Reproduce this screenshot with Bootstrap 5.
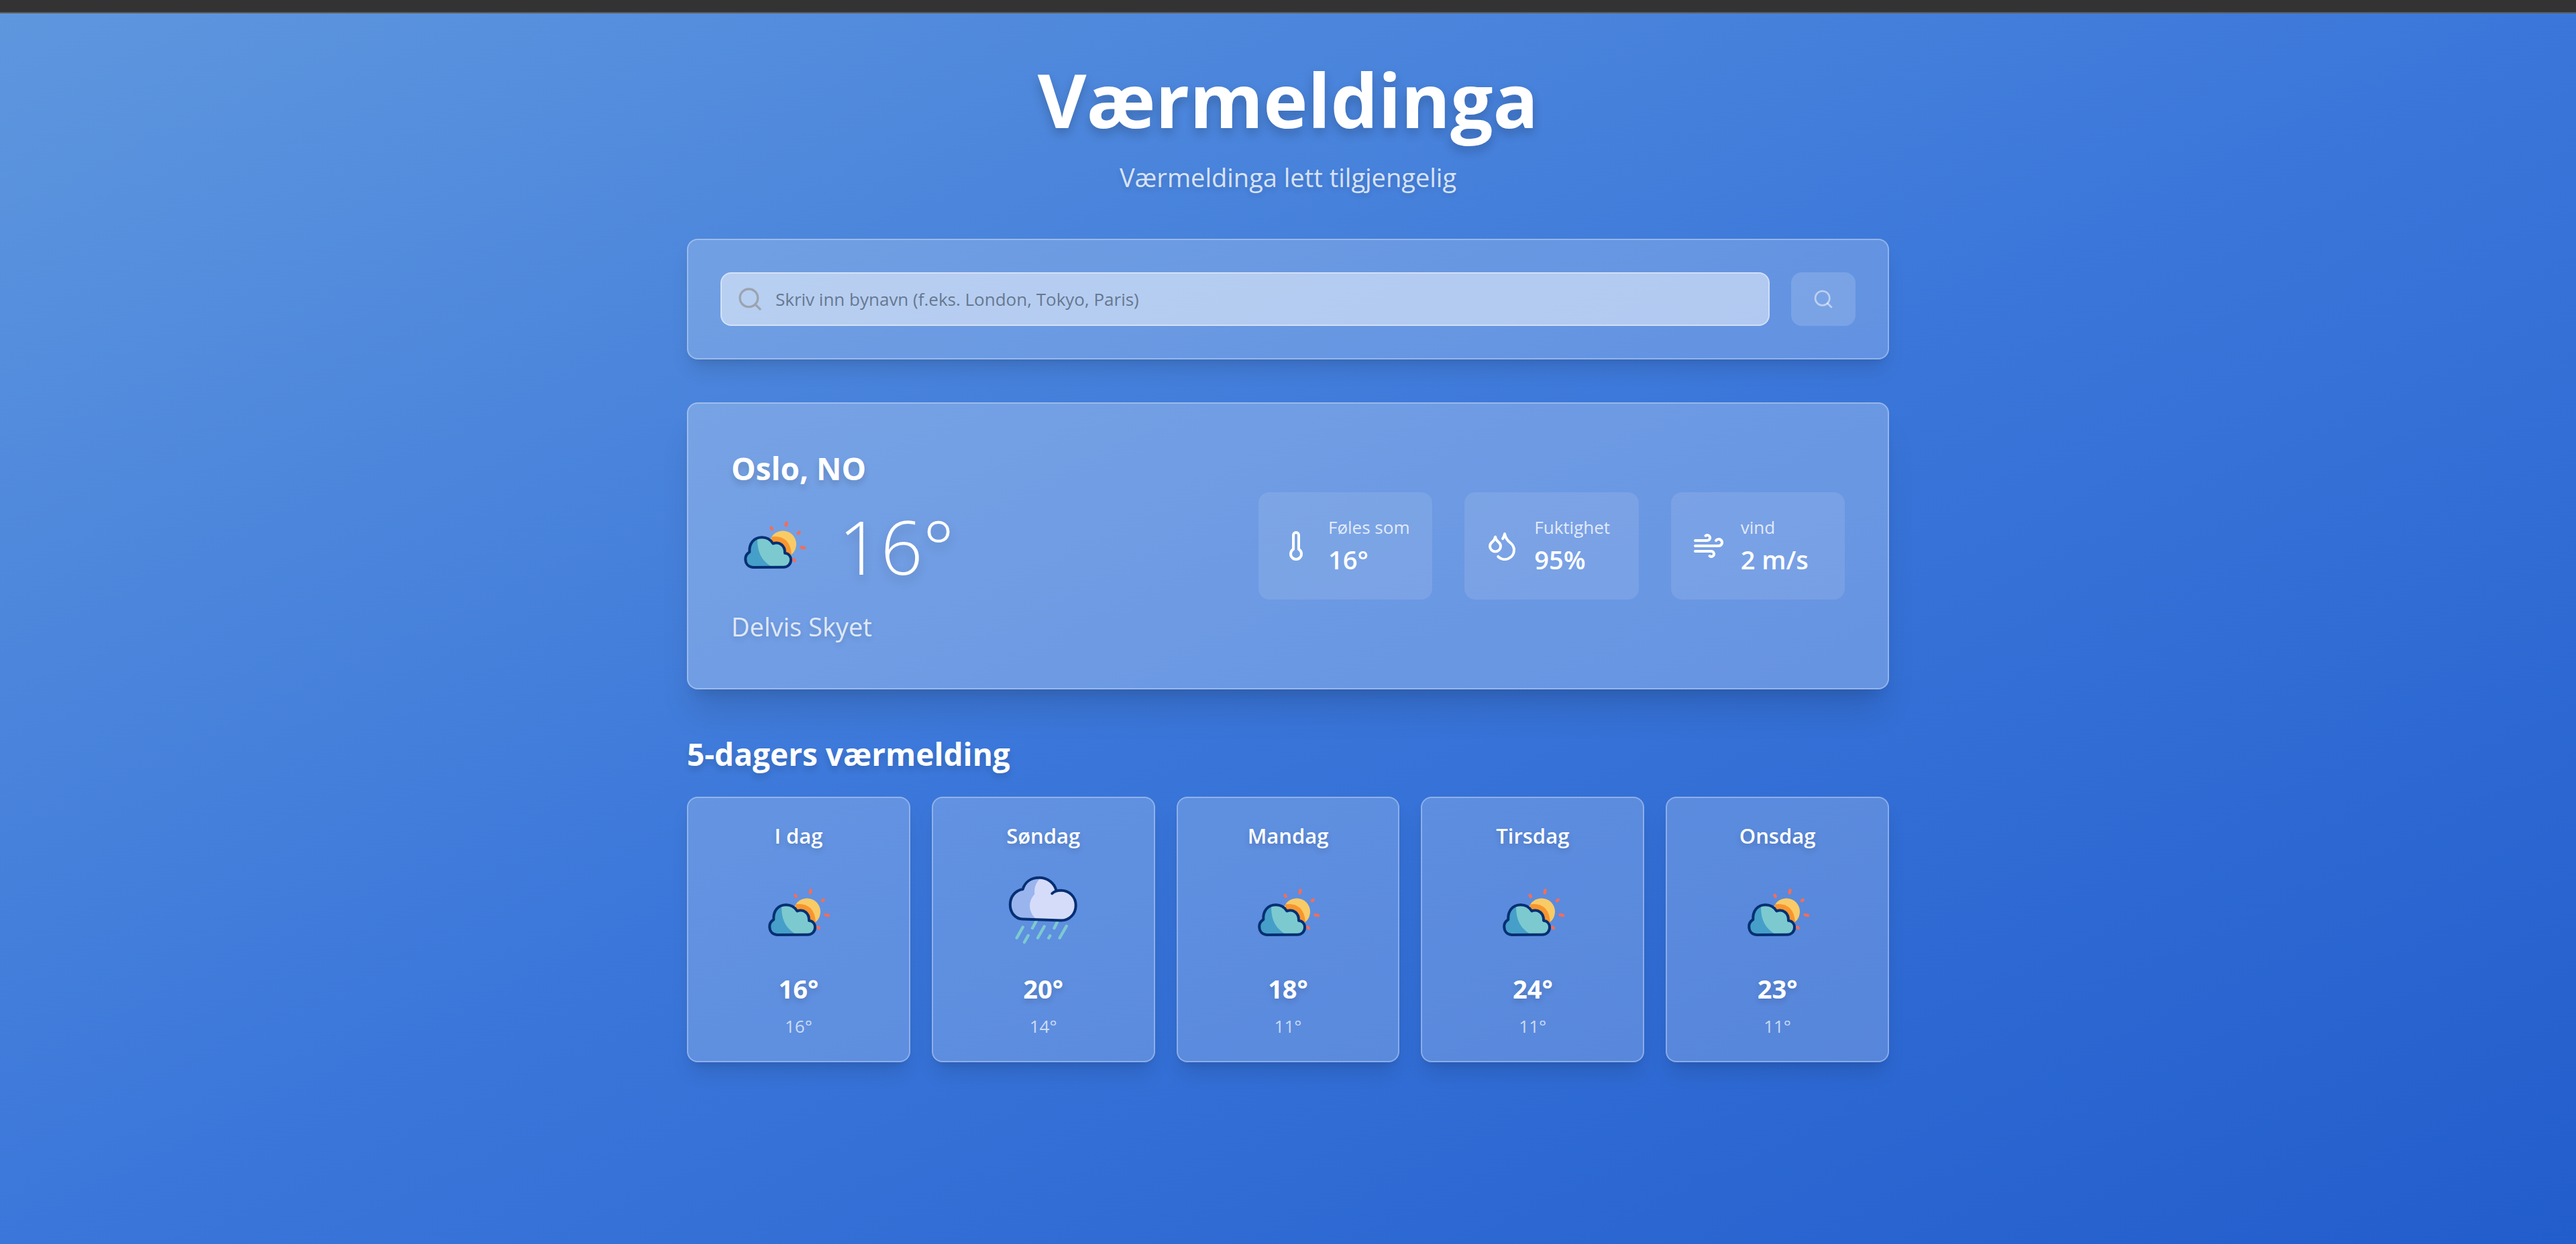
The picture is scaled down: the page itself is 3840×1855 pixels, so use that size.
<!DOCTYPE html>
<html lang="no">
<head>
<meta charset="utf-8">
<meta name="viewport" content="width=device-width, initial-scale=1">
<title>Værmeldinga</title>
<link href="https://cdn.jsdelivr.net/npm/bootstrap@5.3.0/dist/css/bootstrap.min.css" rel="stylesheet">
<style>
  body { font-family: "Open Sans", "Noto Sans", sans-serif; color: #fff; font-size: 26px; line-height: 40px;
    background: linear-gradient(to bottom right, #5f97de 0%, #3b77da 50%, #225dcc 100%) no-repeat; min-height: 100vh; }
  .top-strip { height: 20px; background: #333; border-bottom: 2px solid #5c5c5c; }
  .page-wrap { max-width: 1792px; padding: 64px 0; }
  .title-xl { font-size: 112px; line-height: 128px; font-weight: 700; margin-bottom: 24px; text-shadow: 0 8px 16px rgba(0,0,0,.2); }
  .subtitle, .condition { font-size: 38px; line-height: 56px; color: rgba(255,255,255,.8); text-shadow: 0 4px 8px rgba(0,0,0,.12); }
  .subtitle { margin-bottom: 64px; }
  .glass { background: rgba(255,255,255,.2); border: 2px solid rgba(255,255,255,.3); border-radius: 16px; box-shadow: 0 20px 30px -6px rgba(0,0,0,.12), 0 8px 12px -8px rgba(0,0,0,.12); }
  .glass-now { background: rgba(255,255,255,.25); box-shadow: 0 40px 50px -10px rgba(0,0,0,.12), 0 16px 20px -12px rgba(0,0,0,.12); }
  .search-card { padding: 48px; gap: 32px; margin-bottom: 64px; }
  .search-input.form-control { height: 80px; padding: 0 32px 0 80px; font-size: 26px; border: 2px solid rgba(255,255,255,.4); border-radius: 16px; background: rgba(255,255,255,.5); color: #1f2937; }
  .search-input.form-control::placeholder { color: #66788f; opacity: 1; }
  .search-glyph { left: 24px; width: 40px; height: 40px; color: #9ca3af; }
  .search-btn.btn { width: 96px; height: 80px; border: 0; border-radius: 16px; background: rgba(255,255,255,.15); color: rgba(255,255,255,.5); }
  .line-icon { fill: none; stroke: currentColor; stroke-width: 2; stroke-linecap: round; stroke-linejoin: round; }
  .now-card { padding: 64px; margin-bottom: 64px; }
  .heading-lg { font-size: 46px; line-height: 64px; font-weight: 700; margin: 0; text-shadow: 0 6px 10px rgba(0,0,0,.15); }
  .now-row { gap: 32px; margin: 16px 0; }
  .weather-icon { width: 128px; height: 128px; }
  .now-temp { font-size: 110px; line-height: 136px; font-weight: 300; text-shadow: 0 8px 16px rgba(0,0,0,.15); }
  .stat-grid { display: grid; grid-template-columns: repeat(3, minmax(0, 1fr)); gap: 48px; width: 874px; }
  .stat-tile { padding: 32px; gap: 24px; border-radius: 16px; background: rgba(255,255,255,.1); }
  .stat-label { color: rgba(255,255,255,.8); white-space: nowrap; }
  .stat-value { font-size: 38px; line-height: 56px; font-weight: 600; white-space: nowrap; }
  .day-grid { display: grid; grid-template-columns: repeat(5, 1fr); gap: 32px; margin-top: 32px; }
  .day-card { padding: 32px; }
  .day-name { font-size: 31px; line-height: 48px; font-weight: 600; margin: 0 0 32px; text-shadow: 0 4px 8px rgba(0,0,0,.15); }
  .day-high { font-size: 38px; line-height: 56px; font-weight: 700; margin: 16px 0 8px; text-shadow: 0 4px 8px rgba(0,0,0,.15); }
  .day-low { color: rgba(255,255,255,.7); }
</style>
</head>
<body>
<svg class="d-none" aria-hidden="true">
  <symbol id="search" viewBox="0 0 24 24"><circle cx="11" cy="11" r="8"/><path d="m21 21-4.3-4.3"/></symbol>
  <symbol id="partly" viewBox="0 4 128 128">
    <circle cx="77" cy="61.500" r="20" fill="#f9cb66"/>
    <path d="M60 50.500Q73 48 82 56Q89 63 90 77L80 82L60 60Z" fill="#f8962f"/>
    <g stroke="#f26d5b" stroke-width="4.600" stroke-linecap="round"><path d="M82.500 29.500 81.700 33.500M59.700 37 60.700 39M101.600 44 100 45.200M104.700 66.200 109 67M93.300 84.500 94.700 86"/></g>
    <path d="M32.500 96C25 95.500 21.200 90 21.200 83.500C21.200 79 23.500 75.500 27.300 73.200C26.500 60 34 51.300 46 51.300C53 51.300 58.500 54.500 62.300 60.500C72 57 80.500 63.500 80 74.800C86 75.500 89 80 89 85C89 91 84.500 95.700 78 95.700Z" fill="#7ccad0"/>
    <path d="M39 52.800C39 74 45 86 61.500 95.700H32.500C25 95.500 21.200 90 21.200 83.500C21.200 79 23.500 75.500 27.300 73.200C27 62 31 55.500 39 52.800Z" fill="#459fc9"/>
    <path d="M32.500 96C25 95.500 21.200 90 21.200 83.500C21.200 79 23.500 75.500 27.300 73.200C26.500 60 34 51.300 46 51.300C53 51.300 58.500 54.500 62.300 60.500C72 57 80.500 63.500 80 74.800C86 75.500 89 80 89 85C89 91 84.500 95.700 78 95.700Z" fill="none" stroke="#052f73" stroke-width="4" stroke-linejoin="round"/>
  </symbol>
  <symbol id="rain" viewBox="11 22 128 128">
    <g stroke="#7ccad0" stroke-width="4.400" stroke-linecap="round"><path d="M44.700 102.500 35.700 118.500M65.500 92 59 104M52.700 115 47 125M76.700 101.500 67 118.500M97.500 92 91.500 104M85.300 115.300 83.300 118.700M109.700 101 99.700 118.500"/></g>
    <path d="M44.300 90.500C33 90 26 80.500 26 69C26 56.500 34 47.500 44.700 46C48 35 57 28.800 69 28.800C82 28.800 91.500 37 94.500 48.500C110 46 123.500 55 123.500 70.500C123.500 83 114 92.500 102 92.500Z" fill="#d5dcfa"/>
    <path d="M71.500 29C63 37 61.500 45 62.300 53.500C53 63 51.500 79 65 91L44.300 90.500C33 90 26 80.500 26 69C26 56.500 34 47.500 44.700 46C48 35 57 28.800 71.500 29Z" fill="#9ab4ee"/>
    <path d="M88.300 52.300C91 49.500 95.500 47.700 101.500 47.700C114 47.700 123.700 57.500 123.700 70C123.700 83 114 92.500 102 92.500L44.300 90.500C33 90 25.800 80.500 25.800 69C25.800 56.500 34 47.500 44.700 46C48 35 57 28.800 69 28.800C82 28.800 91.500 37 94.300 47" fill="none" stroke="#052f73" stroke-width="4" stroke-linecap="round" stroke-linejoin="round"/>
  </symbol>
</svg>

<div class="top-strip"></div>
<main class="page-wrap container-fluid mx-auto">
  <header class="text-center">
    <h1 class="title-xl">Værmeldinga</h1>
    <p class="subtitle">Værmeldinga lett tilgjengelig</p>
  </header>

  <form class="glass search-card d-flex align-items-center">
    <div class="position-relative flex-grow-1 d-flex align-items-center">
      <svg class="line-icon search-glyph position-absolute"><use href="#search"/></svg>
      <input class="form-control search-input" type="text" aria-label="Bynavn" placeholder="Skriv inn bynavn (f.eks. London, Tokyo, Paris)">
    </div>
    <button class="btn search-btn d-flex align-items-center justify-content-center p-0" type="button" aria-label="Søk">
      <svg class="line-icon" width="32" height="32"><use href="#search"/></svg>
    </button>
  </form>

  <section class="glass glass-now now-card d-flex align-items-center justify-content-between">
    <div>
      <h2 class="heading-lg">Oslo, NO</h2>
      <div class="now-row d-flex align-items-start">
        <svg class="weather-icon my-2"><use href="#partly"/></svg>
        <div class="now-temp">16°</div>
      </div>
      <div class="condition">Delvis Skyet</div>
    </div>
    <div class="stat-grid">
      <div class="stat-tile d-flex align-items-center">
        <svg class="line-icon flex-shrink-0" width="48" height="48" viewBox="0 0 24 24"><path d="M14 4v10.540a4 4 0 1 1-4 0V4a2 2 0 0 1 4 0Z"/></svg>
        <div><div class="stat-label">Føles som</div><div class="stat-value">16°</div></div>
      </div>
      <div class="stat-tile d-flex align-items-center">
        <svg class="line-icon flex-shrink-0" width="48" height="48" viewBox="0 0 24 24"><path d="M7 16.300c2.200 0 4-1.830 4-4.050 0-1.160-.57-2.260-1.710-3.190S7.290 6.750 7 5.300c-.29 1.450-1.140 2.840-2.290 3.760S3 11.100 3 12.250c0 2.220 1.800 4.050 4 4.050z"/><path d="M12.560 6.600A10.970 10.970 0 0 0 14 3.020c.5 2.500 2 4.900 4 6.500s3 3.500 3 5.500a6.980 6.980 0 0 1-11.910 4.970"/></svg>
        <div><div class="stat-label">Fuktighet</div><div class="stat-value">95%</div></div>
      </div>
      <div class="stat-tile d-flex align-items-center">
        <svg class="line-icon flex-shrink-0" width="48" height="48" viewBox="0 0 24 24"><path d="M12.800 19.600A2 2 0 1 0 14 16H2"/><path d="M17.500 8a2.500 2.500 0 1 1 2 4H2"/><path d="M9.800 4.400A2 2 0 1 1 11 8H2"/></svg>
        <div><div class="stat-label">vind</div><div class="stat-value">2 m/s</div></div>
      </div>
    </div>
  </section>

  <section>
    <h2 class="heading-lg">5-dagers værmelding</h2>
    <div class="day-grid text-center">
      <article class="glass day-card"><h3 class="day-name">I dag</h3><svg class="weather-icon d-block mx-auto"><use href="#partly"/></svg><div class="day-high">16°</div><div class="day-low">16°</div></article>
      <article class="glass day-card"><h3 class="day-name">Søndag</h3><svg class="weather-icon d-block mx-auto"><use href="#rain"/></svg><div class="day-high">20°</div><div class="day-low">14°</div></article>
      <article class="glass day-card"><h3 class="day-name">Mandag</h3><svg class="weather-icon d-block mx-auto"><use href="#partly"/></svg><div class="day-high">18°</div><div class="day-low">11°</div></article>
      <article class="glass day-card"><h3 class="day-name">Tirsdag</h3><svg class="weather-icon d-block mx-auto"><use href="#partly"/></svg><div class="day-high">24°</div><div class="day-low">11°</div></article>
      <article class="glass day-card"><h3 class="day-name">Onsdag</h3><svg class="weather-icon d-block mx-auto"><use href="#partly"/></svg><div class="day-high">23°</div><div class="day-low">11°</div></article>
    </div>
  </section>
</main>
<script src="https://cdn.jsdelivr.net/npm/bootstrap@5.3.0/dist/js/bootstrap.bundle.min.js"></script>
</body>
</html>
